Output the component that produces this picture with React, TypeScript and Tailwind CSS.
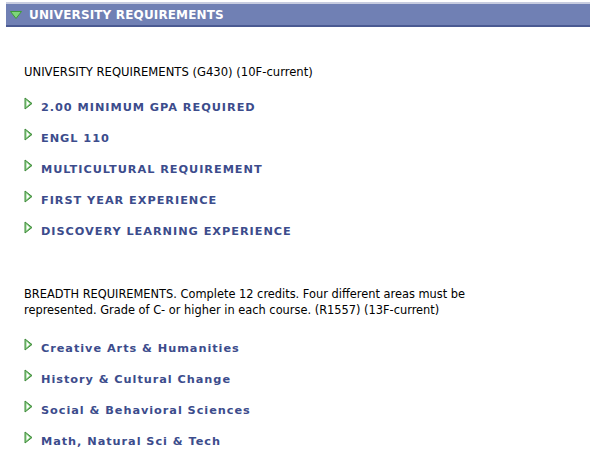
import React from "react";

const Arrow = () => (
  <svg width="9" height="13" viewBox="0 0 9 13" className="shrink-0">
    <defs>
      <linearGradient id="g" x1="0" y1="0" x2="1" y2="0">
        <stop offset="0" stopColor="#8fd48a" />
        <stop offset="1" stopColor="#5fb35a" />
      </linearGradient>
    </defs>
    <path d="M1 1 L8 6.5 L1 12 Z" fill="url(#g)" stroke="#3f8a3a" strokeWidth="1" strokeLinejoin="round" />
    <path d="M2.5 3.5 L5.8 6.5 L2.5 9.5 Z" fill="#ffffff" />
  </svg>
);

const Item = ({ label }: { label: string }) => (
  <div className="flex items-start h-[31px]">
    <div className="w-[17px]">
      <Arrow />
    </div>
    <a className="text-[11.3px] font-bold tracking-[0.95px] text-[#3c4c8c] mt-[4px] leading-[14px]">{label}</a>
  </div>
);

export default function App() {
  return (
    <div className="w-[604px] h-[468px] bg-white" style={{ fontFamily: '"DejaVu Sans", Verdana, sans-serif' }}>
      <div className="pt-[2px] pl-[6px] pr-[14px]">
        <div className="border-t-2 border-[#c8cde0] bg-[#7080b4] h-[25px] border-b-2 border-b-[#4a5a92] flex items-center">
          <svg width="12" height="8" viewBox="0 0 12 8" className="ml-[4px] mr-[7px]">
            <path d="M0.5 0.5 L11.5 0.5 L6 7.5 Z" fill="#7ed67a" stroke="#3f9a3a" strokeWidth="1" />
          </svg>
          <span className="text-white font-bold text-[12px] tracking-[0.15px]">UNIVERSITY REQUIREMENTS</span>
        </div>
      </div>
      <div className="pl-[24px] pt-[37px]">
        <div className="text-[11.6px] text-black leading-[16px]">UNIVERSITY REQUIREMENTS (G430) (10F-current)</div>
        <div className="mt-[17px]">
          <Item label="2.00 MINIMUM GPA REQUIRED" />
          <Item label="ENGL 110" />
          <Item label="MULTICULTURAL REQUIREMENT" />
          <Item label="FIRST YEAR EXPERIENCE" />
          <Item label="DISCOVERY LEARNING EXPERIENCE" />
        </div>
        <div className="mt-[34px] text-[11.4px] text-black leading-[16px] w-[470px]">
          BREADTH REQUIREMENTS. Complete 12 credits. Four different areas must be represented. Grade of C- or higher in each course. (R1557) (13F-current)
        </div>
        <div className="mt-[20px]">
          <Item label="Creative Arts & Humanities" />
          <Item label="History & Cultural Change" />
          <Item label="Social & Behavioral Sciences" />
          <Item label="Math, Natural Sci & Tech" />
        </div>
      </div>
    </div>
  );
}
